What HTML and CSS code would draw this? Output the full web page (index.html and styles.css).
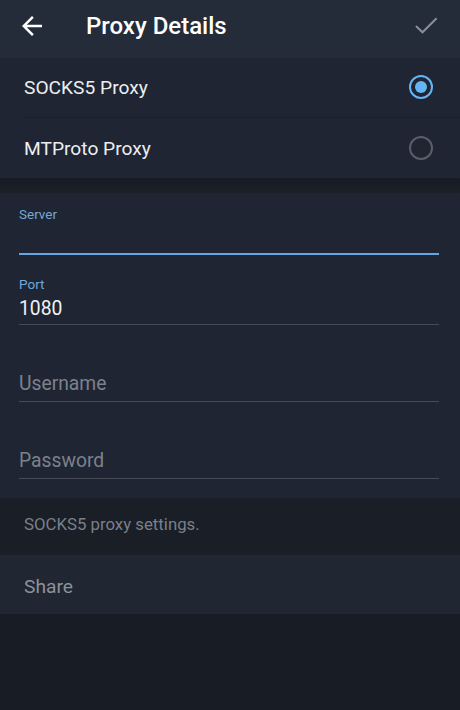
FILE: index.html
```html
<!DOCTYPE html>
<html>
<head>
<meta charset="utf-8">
<link rel="stylesheet" href="styles.css">
</head>
<body>
<div class="screen">
  <header class="topbar">
    <svg class="back" width="30" height="30" viewBox="0 0 24 24"><path d="M20 11H7.83l5.59-5.59L12 4l-8 8 8 8 1.41-1.41L7.83 13H20v-2z" fill="#ffffff"/></svg>
    <h1 class="title">Proxy Details</h1>
    <svg class="check" width="28" height="28" viewBox="0 0 24 24"><polyline points="4,12.6 9,17.4 20.5,6" fill="none" stroke="#8a8f98" stroke-width="1.7" stroke-linecap="square"/></svg>
  </header>

  <section class="options">
    <div class="option">
      <span class="option-text">SOCKS5 Proxy</span>
      <span class="radio radio--on"></span>
    </div>
    <div class="option option--last">
      <span class="option-text">MTProto Proxy</span>
      <span class="radio"></span>
    </div>
  </section>

  <div class="gap"></div>

  <section class="form">
    <div class="field field--first">
      <div class="label">Server</div>
      <div class="value"></div>
      <div class="line line--active"></div>
    </div>
    <div class="field field--filled">
      <div class="label">Port</div>
      <div class="value">1080</div>
      <div class="line"></div>
    </div>
    <div class="field">
      <div class="label"></div>
      <div class="value value--placeholder">Username</div>
      <div class="line"></div>
    </div>
    <div class="field">
      <div class="label"></div>
      <div class="value value--placeholder">Password</div>
      <div class="line"></div>
    </div>
  </section>

  <div class="hint">SOCKS5 proxy settings.</div>

  <div class="share">Share</div>

  <div class="rest"></div>
</div>
</body>
</html>
```

FILE: styles.css
```css
* { box-sizing: border-box; }
html, body { margin: 0; padding: 0; }
body {
  width: 460px;
  height: 710px;
  background: #181c25;
  font-family: Roboto, "Noto Sans", sans-serif;
  overflow: hidden;
}
.screen {
  display: flex;
  flex-direction: column;
  height: 710px;
}
.topbar {
  height: 58px;
  background: #252c39;
  display: flex;
  align-items: center;
  padding: 0 20px 0 17px;
  flex-shrink: 0;
}
.back { flex-shrink: 0; margin-top: -6px; }
.title {
  margin: -6px 0 0 39px;
  font-size: 24px;
  font-weight: 500;
  color: #ffffff;
  flex: 1;
}
.check { margin-top: -6px; }

.options {
  background: #1f2532;
}
.option {
  height: 60px;
  display: flex;
  align-items: center;
  justify-content: space-between;
  margin-left: 22px;
  padding: 0 27px 0 2px;
  border-bottom: 1px solid #1a1f29;
}
.option--last { border-bottom: none; }
.option-text {
  font-size: 19.2px;
  color: #eceef1;
}
.radio {
  width: 24px;
  height: 24px;
  border-radius: 50%;
  border: 2px solid #5a5e66;
  display: flex;
  align-items: center;
  justify-content: center;
  margin-top: -1px;
}
.radio--on { border-color: #64b5f6; }
.radio--on::after {
  content: "";
  width: 12px;
  height: 12px;
  border-radius: 50%;
  background: #64b5f6;
}

.gap {
  height: 15px;
  background: linear-gradient(#161b23, #1b2029);
}

.form {
  background: #1f2532;
  padding: 0 21px 19px 19px;
}
.field { padding-top: 28px; }
.field--first { padding-top: 13px; }
.field--filled { padding-top: 21px; }
.label {
  height: 16px;
  line-height: 16px;
  font-size: 13.5px;
  color: #6fa8dc;
}
.value {
  height: 32px;
  line-height: 24px;
  padding: 5px 0 3px 0;
  font-size: 19.3px;
  color: #f1f2f4;
}
.value--placeholder { color: #7b828d; padding-top: 3px; }
.line {
  height: 1px;
  background: #464c57;
}
.line--active {
  height: 2px;
  background: #64a6e0;
  margin-top: -1px;
}

.hint {
  height: 57px;
  background: #191e27;
  padding: 16px 24px 0;
  font-size: 16.8px;
  line-height: 20px;
  color: #7a808a;
}
.share {
  height: 59px;
  background: #212633;
  display: flex;
  align-items: center;
  padding: 3px 24px 0;
  font-size: 19.2px;
  color: #8c929b;
}
.rest {
  flex: 1;
  background: #181c25;
}
```
